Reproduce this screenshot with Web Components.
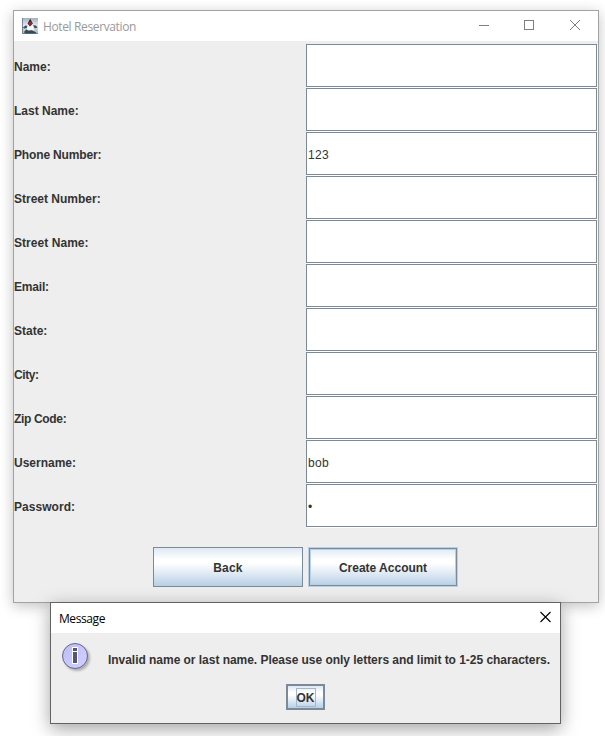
<!DOCTYPE html>
<html lang="en"><head><meta charset="utf-8"><title>Hotel Reservation</title>
<style>
html,body{margin:0;background:#fff}
body{width:605px;height:736px;overflow:hidden;font:12px "Liberation Sans",Arial,sans-serif;color:#333}
</style></head><body>
<hotel-desktop></hotel-desktop>
<script>
const define=(name,html)=>customElements.define(name,class extends HTMLElement{
  constructor(){super();this.attachShadow({mode:'open'}).innerHTML=html;}
});

define('title-bar',`<style>
:host{display:flex;align-items:center;height:30px;box-sizing:border-box;background:#fff;font-family:"Open Sans","Noto Sans",sans-serif;white-space:nowrap}
.t{flex:1;letter-spacing:var(--ls,0)}
</style><slot name="icon"></slot><span class="t"><slot></slot></span><slot name="controls"></slot>`);

define('duke-icon',`<style>:host{display:block;width:16px;height:16px;margin-right:5px}svg{display:block}</style>
<svg width="16" height="16" viewBox="0 0 16 16"><defs><linearGradient id="b" x1="0" y1="0" x2="0" y2="1"><stop offset="0" stop-color="#a3b0bf"/><stop offset=".45" stop-color="#e3e8ee"/><stop offset="1" stop-color="#a3b0bd"/></linearGradient></defs>
<rect width="16" height="16" fill="url(#b)"/><path d="M.5 0V15.5H16" fill="none" stroke="#71869b"/>
<path d="M1 9.4 3.5 7.5 6 8 5.2 10 2 10.6zM11 7.2l3 .3 1.5 2.2-2.8.6z" fill="#3c5058"/>
<path d="M2 14 4.6 11.2 7 12.6 10 12.2 14.4 14.6 13 15.4H3z" fill="#3a4a52"/>
<path d="M5 9 6.5 6 10 6 11.6 9.5 12 12.6 9 11.8 6 12.6 4.6 11z" fill="#f7f7f5"/>
<path d="M8.2 .8 5.6 5.4 8 8.6 10.8 5.6z" fill="#2b2328"/><circle cx="8.3" cy="5.4" r="1.9" fill="#9c2333"/></svg>`);

define('window-controls',`<style>:host{display:block}svg{display:block}</style>
<svg width="119" height="30" viewBox="0 0 119 30" fill="none" stroke="#7f7f7f"><path d="M0 14.5H10"/><rect x="45.5" y="9.5" width="9" height="9"/><path d="M91 9 101 19M101 9 91 19"/></svg>`);

define('close-icon',`<style>:host{display:block;margin-right:9px}svg{display:block}</style>
<svg width="11" height="30" viewBox="0 0 11 30" fill="none" stroke="#000" stroke-width="1.1"><path d="M.5 9 10.5 19M10.5 9 .5 19"/></svg>`);

define('form-row',`<style>
:host{display:grid;grid-template-columns:292px 291px;height:43px;align-items:center;color:#333}
.l{font-weight:bold;white-space:nowrap;letter-spacing:var(--ls,0);padding-top:2px}
.f{height:43px;box-sizing:border-box;background:#fff;border:1px solid #7a8a99;box-shadow:1px 1px #fff;padding:2px 0 0 1px;display:flex;align-items:center;letter-spacing:.33px}
</style><span class="l"><slot name="label"></slot></span><div class="f"><slot></slot></div>`);

define('metal-button',`<style>
:host{display:flex;align-items:center;justify-content:center;box-sizing:border-box;width:150px;height:40px;border:1px solid #7a8a99;font-weight:bold;white-space:nowrap;letter-spacing:var(--ls,0);
background:linear-gradient(#dde8f3 0,#fff 30%,#fff 40%,#b8cfe5 100%);padding-top:1px}
:host([focused]){border-color:#b8cfe5;box-shadow:inset 0 0 0 1px #7a8a99,inset 0 0 0 2px #b8cfe5}
:host([ok]){width:39px;height:26px;border-width:2px;padding:0}
:host([ok]) span{border:1px solid #a3b8cc;width:18px;height:17px;line-height:19px;text-align:center;flex:none}
</style><span><slot></slot></span>`);

define('info-icon',`<style>:host{display:block;width:32px;height:32px}svg{display:block}</style>
<svg width="32" height="32" viewBox="0 0 32 32"><defs><filter id="s" x="-20%" y="-20%" width="150%" height="150%"><feGaussianBlur stdDeviation="1"/></filter><linearGradient id="g" x1="0" y1="0" x2="1" y2="1"><stop offset="0" stop-color="#bcbcf4"/><stop offset="1" stop-color="#d2d2ff"/></linearGradient></defs>
<circle cx="16" cy="16" r="13" fill="#888" opacity=".6" filter="url(#s)"/><circle cx="14" cy="14" r="12.5" fill="url(#g)" stroke="#65658e"/>
<path d="M11 5h6v5h-6zM11 10h6v12h-6z" fill="#fff"/><path d="M12 6h4v3h-4zM12 10h4v11h-4z" fill="#55557c"/></svg>`);

define('main-window',`<style>
:host{display:flex;flex-direction:column;box-sizing:border-box;width:586px;height:593px;border:1px solid #a2a2a2;background:#eee;box-shadow:0 3px 13px rgba(0,0,0,.24)}
title-bar{color:#999;padding-left:8px;--ls:-.37px}
.rows{display:grid;gap:1px;padding-top:3px}
.buttons{display:flex;justify-content:center;gap:5px;margin-top:20px;padding-right:1px}
</style>
<title-bar><duke-icon slot="icon"></duke-icon>Hotel Reservation<window-controls slot="controls"></window-controls></title-bar>
<div class="rows">${[['Name:','',0],['Last Name:','',0],['Phone Number:','123',-.15],['Street Number:','',0],['Street Name:','',.05],['Email:','',-.2],['State:','',0],['City:','',-.4],['Zip Code:','',-.33],['Username:','bob',0],['Password:','•',.05]].map(([l,v,s])=>`<form-row style="--ls:${s}px"><span slot="label">${l}</span>${v}</form-row>`).join('')}</div>
<div class="buttons"><metal-button style="--ls:.2px">Back</metal-button><metal-button focused>Create Account</metal-button></div>`);

define('message-dialog',`<style>
:host{display:flex;flex-direction:column;box-sizing:border-box;width:511px;height:122px;border:1px solid #626262;background:#eee;box-shadow:0 5px 17px rgba(0,0,0,.36)}
title-bar{color:#000;padding-left:8px;--ls:-.42px}
.m{display:flex;height:41px;margin:9px 0 0 10px;--ls:-.035px}
.m span{font-weight:bold;white-space:nowrap;margin:11px 0 0 15px;letter-spacing:var(--ls,0)}
metal-button{align-self:center;margin-top:1px}
</style>
<title-bar>Message<close-icon slot="controls"></close-icon></title-bar>
<div class="m"><info-icon></info-icon><span>Invalid name or last name. Please use only letters and limit to 1-25 characters.</span></div>
<metal-button ok>OK</metal-button>`);

define('hotel-desktop',`<style>
:host{display:block;position:relative;width:605px;height:736px;overflow:hidden}
main-window{position:absolute;left:13px;top:10px}
message-dialog{position:absolute;left:50px;top:602px}
</style><main-window></main-window><message-dialog></message-dialog>`);
</script></body></html>
